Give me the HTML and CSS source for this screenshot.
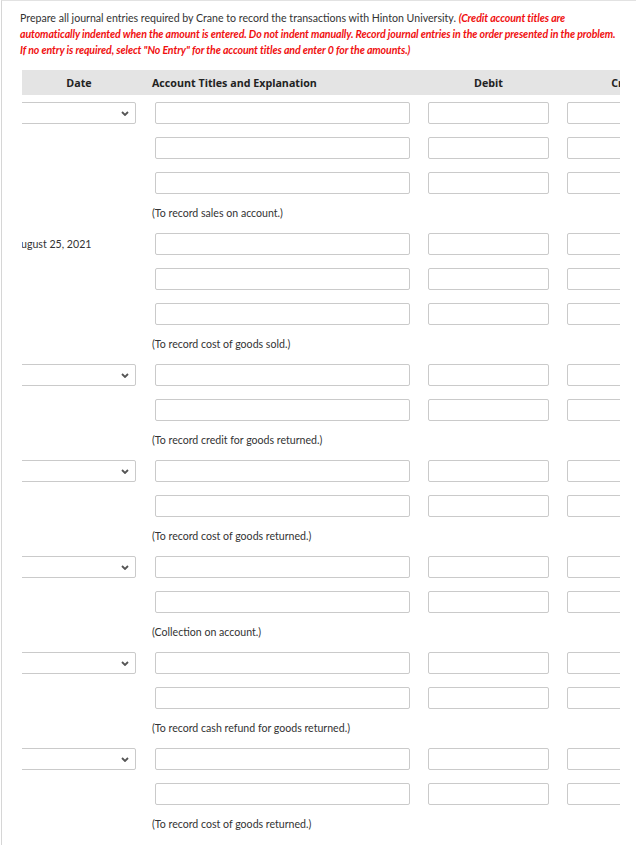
FILE: index.html
```html
<!DOCTYPE html>
<html lang="en">
<head>
<meta charset="utf-8">
<title>Journal entries</title>
<link rel="stylesheet" href="styles.css">
</head>
<body>
<div class="panel">
  <p class="instructions">Prepare all journal entries required by Crane to record the transactions with Hinton University. <em class="note">(Credit account titles are<br>automatically indented when the amount is entered. Do not indent manually. Record journal entries in the order presented in the problem.<br>If no entry is required, select "No Entry" for the account titles and enter 0 for the amounts.)</em></p>
  <div class="scroller">
    <table class="journal">
      <colgroup>
        <col class="col-date">
        <col class="col-acct">
        <col class="col-amt">
        <col class="col-amt">
      </colgroup>
      <thead>
        <tr>
          <th class="h-date">Date</th>
          <th class="h-acct">Account Titles and Explanation</th>
          <th class="h-amt">Debit</th>
          <th class="h-amt">Credit</th>
        </tr>
      </thead>
      <tbody>
        <!-- group 1 -->
        <tr class="entry">
          <td class="date"><div class="select"><svg width="8" height="5" viewBox="0 0 8 5"><path d="M1 1 L4 4 L7 1" fill="none" stroke="#555" stroke-width="1.8"/></svg></div></td>
          <td class="acct"><div class="field"></div></td>
          <td class="amt"><div class="field"></div></td>
          <td class="amt"><div class="field"></div></td>
        </tr>
        <tr class="entry">
          <td class="date"></td>
          <td class="acct"><div class="field"></div></td>
          <td class="amt"><div class="field"></div></td>
          <td class="amt"><div class="field"></div></td>
        </tr>
        <tr class="entry">
          <td class="date"></td>
          <td class="acct"><div class="field"></div></td>
          <td class="amt"><div class="field"></div></td>
          <td class="amt"><div class="field"></div></td>
        </tr>
        <tr class="explain"><td></td><td class="text">(To record sales on account.)</td><td></td><td></td></tr>
        <!-- group 2 -->
        <tr class="entry">
          <td class="date"><span class="date-text">August 25, 2021</span></td>
          <td class="acct"><div class="field"></div></td>
          <td class="amt"><div class="field"></div></td>
          <td class="amt"><div class="field"></div></td>
        </tr>
        <tr class="entry">
          <td class="date"></td>
          <td class="acct"><div class="field"></div></td>
          <td class="amt"><div class="field"></div></td>
          <td class="amt"><div class="field"></div></td>
        </tr>
        <tr class="entry">
          <td class="date"></td>
          <td class="acct"><div class="field"></div></td>
          <td class="amt"><div class="field"></div></td>
          <td class="amt"><div class="field"></div></td>
        </tr>
        <tr class="explain"><td></td><td class="text">(To record cost of goods sold.)</td><td></td><td></td></tr>
        <!-- group 3 -->
        <tr class="entry">
          <td class="date"><div class="select"><svg width="8" height="5" viewBox="0 0 8 5"><path d="M1 1 L4 4 L7 1" fill="none" stroke="#555" stroke-width="1.8"/></svg></div></td>
          <td class="acct"><div class="field"></div></td>
          <td class="amt"><div class="field"></div></td>
          <td class="amt"><div class="field"></div></td>
        </tr>
        <tr class="entry">
          <td class="date"></td>
          <td class="acct"><div class="field"></div></td>
          <td class="amt"><div class="field"></div></td>
          <td class="amt"><div class="field"></div></td>
        </tr>
        <tr class="explain"><td></td><td class="text">(To record credit for goods returned.)</td><td></td><td></td></tr>
        <!-- group 4 -->
        <tr class="entry">
          <td class="date"><div class="select"><svg width="8" height="5" viewBox="0 0 8 5"><path d="M1 1 L4 4 L7 1" fill="none" stroke="#555" stroke-width="1.8"/></svg></div></td>
          <td class="acct"><div class="field"></div></td>
          <td class="amt"><div class="field"></div></td>
          <td class="amt"><div class="field"></div></td>
        </tr>
        <tr class="entry">
          <td class="date"></td>
          <td class="acct"><div class="field"></div></td>
          <td class="amt"><div class="field"></div></td>
          <td class="amt"><div class="field"></div></td>
        </tr>
        <tr class="explain"><td></td><td class="text">(To record cost of goods returned.)</td><td></td><td></td></tr>
        <!-- group 5 -->
        <tr class="entry">
          <td class="date"><div class="select"><svg width="8" height="5" viewBox="0 0 8 5"><path d="M1 1 L4 4 L7 1" fill="none" stroke="#555" stroke-width="1.8"/></svg></div></td>
          <td class="acct"><div class="field"></div></td>
          <td class="amt"><div class="field"></div></td>
          <td class="amt"><div class="field"></div></td>
        </tr>
        <tr class="entry">
          <td class="date"></td>
          <td class="acct"><div class="field"></div></td>
          <td class="amt"><div class="field"></div></td>
          <td class="amt"><div class="field"></div></td>
        </tr>
        <tr class="explain"><td></td><td class="text">(Collection on account.)</td><td></td><td></td></tr>
        <!-- group 6 -->
        <tr class="entry">
          <td class="date"><div class="select"><svg width="8" height="5" viewBox="0 0 8 5"><path d="M1 1 L4 4 L7 1" fill="none" stroke="#555" stroke-width="1.8"/></svg></div></td>
          <td class="acct"><div class="field"></div></td>
          <td class="amt"><div class="field"></div></td>
          <td class="amt"><div class="field"></div></td>
        </tr>
        <tr class="entry">
          <td class="date"></td>
          <td class="acct"><div class="field"></div></td>
          <td class="amt"><div class="field"></div></td>
          <td class="amt"><div class="field"></div></td>
        </tr>
        <tr class="explain"><td></td><td class="text">(To record cash refund for goods returned.)</td><td></td><td></td></tr>
        <!-- group 7 -->
        <tr class="entry">
          <td class="date"><div class="select"><svg width="8" height="5" viewBox="0 0 8 5"><path d="M1 1 L4 4 L7 1" fill="none" stroke="#555" stroke-width="1.8"/></svg></div></td>
          <td class="acct"><div class="field"></div></td>
          <td class="amt"><div class="field"></div></td>
          <td class="amt"><div class="field"></div></td>
        </tr>
        <tr class="entry">
          <td class="date"></td>
          <td class="acct"><div class="field"></div></td>
          <td class="amt"><div class="field"></div></td>
          <td class="amt"><div class="field"></div></td>
        </tr>
        <tr class="explain"><td></td><td class="text">(To record cost of goods returned.)</td><td></td><td></td></tr>
      </tbody>
    </table>
  </div>
</div>
</body>
</html>
```
FILE: styles.css
```css
html, body {
  margin: 0;
  padding: 0;
  background: #fff;
}

body {
  font-family: Lato, "Liberation Sans", sans-serif;
  color: #333;
}

.panel {
  margin-left: 1px;
  min-height: 844px;
  border-top: 1px solid #e2e2e2;
  border-left: 1px solid #d6d6d6;
  padding: 9px 0 0 18px;
}

.instructions {
  margin: 0;
  font-size: 10.6px;
  line-height: 16px;
  color: #333;
}

.note {
  color: #f01010;
  font-weight: 700;
  font-style: italic;
  letter-spacing: -0.11px;
}

.scroller {
  margin-top: 12px;
  margin-left: 2px;
  width: 598px;
  overflow: hidden;
}

.journal {
  margin-left: -10px;
  width: 685px;
  table-layout: fixed;
  border-collapse: collapse;
  border-spacing: 0;
}

.col-date { width: 134px; }
.col-acct { width: 273px; }
.col-amt { width: 139px; }

.journal thead tr {
  height: 25px;
}

.journal th {
  padding: 0;
  background: #e4e4e4;
  font-family: "Open Sans", "Liberation Sans", sans-serif;
  font-weight: 700;
  font-size: 10.7px;
  color: #222;
  vertical-align: middle;
}

.h-date, .h-amt { text-align: center; }
.journal th.h-acct { text-align: left; padding-left: 6px; }

.journal td {
  padding: 0;
  vertical-align: top;
}

.entry {
  height: 35px;
}

.entry td {
  padding: 7px 9px 6px;
}

.entry td.date {
  padding: 7px 10px 6px 2px;
}

.field,
.select {
  box-sizing: border-box;
  height: 22px;
  border: 1px solid #cacaca;
  border-radius: 2px;
  background: #fff;
}

.select {
  display: flex;
  align-items: center;
  justify-content: flex-end;
  padding-right: 6px;
}

.select svg {
  display: block;
}

.date-text {
  display: block;
  font-size: 10.6px;
  line-height: 22px;
  color: #333;
}

.explain {
  height: 26px;
}

.explain td {
  vertical-align: middle;
}

.explain td.text {
  padding-left: 6px;
  font-size: 10.6px;
  color: #333;
  white-space: nowrap;
}
```
